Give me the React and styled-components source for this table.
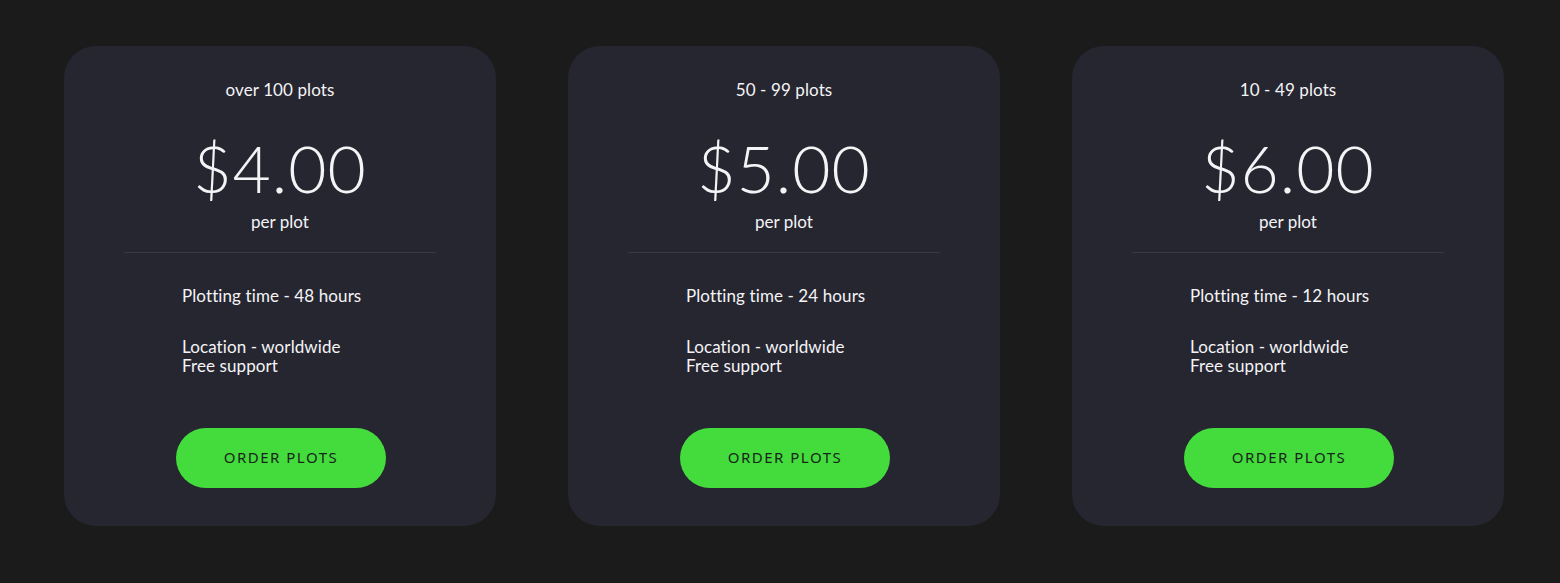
import React from "react";
import styled, { createGlobalStyle } from "styled-components";

const GlobalStyle = createGlobalStyle`
  body {
    margin: 0;
    background: #1b1b1b;
    font-family: "Lato", "Noto Sans", sans-serif;
    color: #f4f4f6;
  }
`;

const plans = [
  { range: "over 100 plots", price: "$4.00", time: "48 hours" },
  { range: "50 - 99 plots", price: "$5.00", time: "24 hours" },
  { range: "10 - 49 plots", price: "$6.00", time: "12 hours" },
];

export default function App() {
  return (
    <Page>
      <GlobalStyle />
      {plans.map((plan) => (
        <Card key={plan.range}>
          <Range>{plan.range}</Range>
          <Price>{plan.price}</Price>
          <Unit>per plot</Unit>
          <Divider />
          <Features>
            <Feature>Plotting time - {plan.time}</Feature>
            <Feature $gap>
              Location - worldwide
              <br />
              Free support
            </Feature>
          </Features>
          <OrderButton>ORDER PLOTS</OrderButton>
        </Card>
      ))}
    </Page>
  );
}

const Page = styled.main`
  display: flex;
  gap: 72px;
  padding: 46px 56px 57px 64px;
`;

const Card = styled.section`
  display: flex;
  flex-direction: column;
  align-items: center;
  width: 432px;
  height: 480px;
  box-sizing: border-box;
  padding: 34px 60px 0;
  background: #262631;
  border-radius: 32px;
`;

const Range = styled.div`
  font-size: 17px;
  line-height: 20px;
  letter-spacing: 0.1px;
`;

const Price = styled.div`
  margin-top: 35px;
  font-size: 66px;
  font-weight: 300;
  line-height: 66px;
  letter-spacing: 1px;
`;

const Unit = styled.div`
  margin-top: 11px;
  font-size: 17px;
  line-height: 20px;
`;

const Divider = styled.hr`
  align-self: stretch;
  margin: 20px 0 0;
  border: none;
  border-top: 1px solid #3a3a45;
`;

const Features = styled.ul`
  align-self: stretch;
  list-style: none;
  margin: 33px 0 0;
  padding: 0 0 0 58px;
`;

const Feature = styled.li`
  font-size: 17px;
  line-height: 19px;
  letter-spacing: 0.1px;
  margin-top: ${(p) => (p.$gap ? "32px" : "0")};
`;

const OrderButton = styled.button`
  margin: 53px 0 0 2px;
  width: 210px;
  height: 60px;
  padding: 0 0 3px;
  border: none;
  border-radius: 30px;
  background: #44dc3c;
  color: #17261a;
  font-family: "Noto Sans", "Lato", sans-serif;
  font-size: 15px;
  font-weight: 400;
  letter-spacing: 1.5px;
  cursor: pointer;
`;
